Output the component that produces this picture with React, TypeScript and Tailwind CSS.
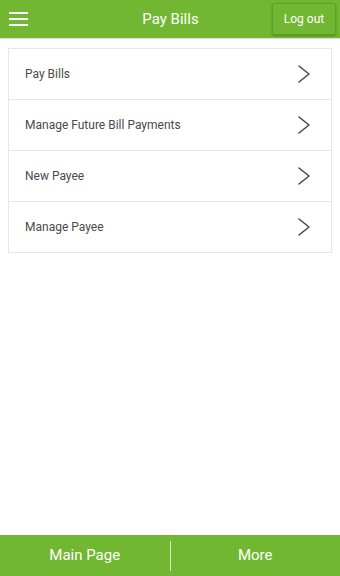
import { useState } from "react";

const items = ["Pay Bills", "Manage Future Bill Payments", "New Payee", "Manage Payee"];

function Chevron() {
  return (
    <svg width="14" height="20" viewBox="0 0 14 20" fill="none">
      <path d="M2 2 L12 10 L2 18" stroke="#4a4a4a" strokeWidth="1.6" strokeLinecap="round" strokeLinejoin="round" />
    </svg>
  );
}

export default function App() {
  const [selected, setSelected] = useState<string | null>(null);

  return (
    <div className="flex h-[576px] w-[340px] flex-col bg-white font-['Roboto',sans-serif]">
      {/* top bar */}
      <header className="flex h-[38px] items-center justify-between bg-[#71b732] pl-[9px] pr-[4px] shadow-[0_1px_1px_rgba(0,0,0,0.12)]">
        <button className="flex h-[20px] w-[20px] flex-col justify-center gap-[4px]">
          <span className="block h-[2px] w-[19px] bg-white" />
          <span className="block h-[2px] w-[19px] bg-white" />
          <span className="block h-[2px] w-[19px] bg-white" />
        </button>
        <h1 className="ml-[40px] text-[15px] text-white">Pay Bills</h1>
        <button className="h-[32px] w-[64px] rounded-[2px] border border-[#5f9e27] text-[12px] text-white shadow-[0_1px_2px_rgba(0,0,0,0.25)]">
          Log out
        </button>
      </header>

      <main className="flex-1 px-[8px] pt-[10px]">
        <ul className="border border-[#e6e6e6]">
          {items.map((item, i) => (
            <li
              key={item}
              onClick={() => setSelected(item)}
              className={`flex items-center justify-between pl-[16px] pr-[20px] ${i > 0 ? "h-[51px] border-t border-[#e6e6e6]" : "h-[50px]"} ${selected === item ? "bg-gray-50" : ""}`}
            >
              <span className="text-[12px] text-[#4a4a4a]">{item}</span>
              <Chevron />
            </li>
          ))}
        </ul>
      </main>

      {/* bottom nav */}
      <nav className="flex h-[41px] items-center bg-[#71b732]">
        <button className="flex-1 text-[15px] text-white">Main Page</button>
        <span className="h-[30px] w-[1px] bg-[#d6ebc3]" />
        <button className="flex-1 text-[15px] text-white">More</button>
      </nav>
    </div>
  );
}
